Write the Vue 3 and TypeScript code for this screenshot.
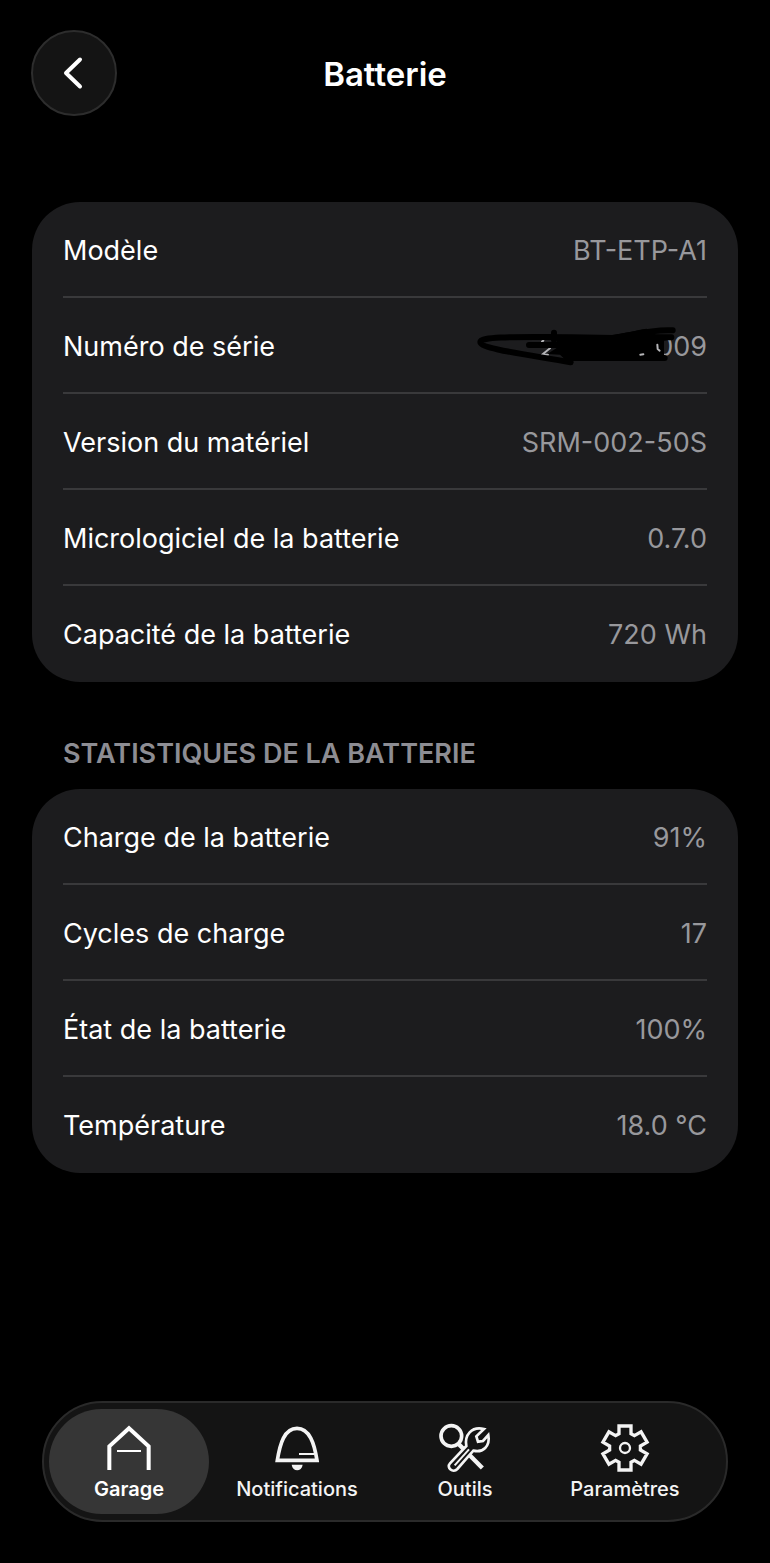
<script setup lang="ts">
import { ref } from 'vue'

interface InfoRow {
  label: string
  value: string
  redacted?: boolean
}

interface Tab {
  id: string
  label: string
}

const details: InfoRow[] = [
  { label: 'Modèle', value: 'BT-ETP-A1' },
  { label: 'Numéro de série', value: '009', redacted: true },
  { label: 'Version du matériel', value: 'SRM-002-50S' },
  { label: 'Micrologiciel de la batterie', value: '0.7.0' },
  { label: 'Capacité de la batterie', value: '720 Wh' },
]

const stats: InfoRow[] = [
  { label: 'Charge de la batterie', value: '91%' },
  { label: 'Cycles de charge', value: '17' },
  { label: 'État de la batterie', value: '100%' },
  { label: 'Température', value: '18.0 °C' },
]

const tabs: Tab[] = [
  { id: 'garage', label: 'Garage' },
  { id: 'notifications', label: 'Notifications' },
  { id: 'tools', label: 'Outils' },
  { id: 'settings', label: 'Paramètres' },
]

const active = ref('garage')
</script>

<template>
  <div class="page">
    <header class="header">
      <button class="back" type="button" aria-label="Retour">
        <svg viewBox="0 0 36 36" aria-hidden="true">
          <path d="M24 4.500 L10 18 L24 31.500" />
        </svg>
      </button>
      <h1 class="title">Batterie</h1>
    </header>

    <main class="content">
      <dl class="card">
        <div v-for="row in details" :key="row.label" class="row">
          <dt class="label">{{ row.label }}</dt>
          <dd class="value">
            {{ row.value }}
            <svg v-if="row.redacted" class="scribble" viewBox="48 405 600 126" aria-hidden="true">
              <path class="trace" d="M246 455 L250 452 M246 494 L270 475 M246 494 H264" />
              <path
                class="ink-fill"
                d="M290 434 L440 437 C500 430 530 420 560 416 L588 434 L636 436 L636 448 L612 452 L612 496 L615 513 L320 513 L300 494 L262 492 L290 474 Z"
              />
              <path
                class="ink"
                d="M638 421 C575 417 525 434 460 444 L290 441 C190 441 61 438 61 456 C61 476 190 492 332 517 M207 465 H330 M282 428 V450 M500 442 H634 M500 504 H614"
              />
              <path class="trace" d="M541 494 L550 493 M592 464 L593 477 L599 482" />
            </svg>
          </dd>
        </div>
      </dl>

      <h2 class="section">STATISTIQUES DE LA BATTERIE</h2>

      <dl class="card">
        <div v-for="row in stats" :key="row.label" class="row">
          <dt class="label">{{ row.label }}</dt>
          <dd class="value">{{ row.value }}</dd>
        </div>
      </dl>
    </main>

    <nav class="tabs" aria-label="Navigation principale">
      <button
        v-for="tab in tabs"
        :key="tab.id"
        type="button"
        class="tab"
        :class="[tab.id, { active: active === tab.id }]"
        :aria-current="active === tab.id ? 'page' : undefined"
        @click="active = tab.id"
      >
        <svg v-if="tab.id === 'garage'" class="icon" viewBox="226 101 144 144" aria-hidden="true">
          <path d="M239 239 V168 L298 114 L357 168 V239" stroke-width="12" />
          <path d="M262 182 H334" stroke-width="6" />
        </svg>
        <svg v-else-if="tab.id === 'notifications'" class="icon" viewBox="146 101 144 144" aria-hidden="true">
          <path d="M159 210 C167 160 180 114 218 114 C256 114 270 160 278 210 Z" stroke-width="11" />
          <path d="M224 191 H270" stroke-width="6" />
          <path class="solid" d="M202 223 H235 C232 245 205 245 202 223 Z" />
        </svg>
        <svg v-else-if="tab.id === 'tools'" class="icon" viewBox="64 71 144 144" aria-hidden="true">
          <circle cx="95" cy="107" r="31" stroke-width="11" />
          <path d="M116 130 L188 203" stroke-width="13" />
          <path
            class="wrench"
            d="M91 189 L140 137 C134 105 155 77 193 86 L170 108 L175 124 L190 122 L206 104 C212 138 190 158 161 151 L113 206 C100 220 79 202 91 189 Z"
            stroke-width="8"
          />
          <path d="M105 195 L148 147" stroke-width="6" />
        </svg>
        <svg v-else class="icon" viewBox="124 101 144 144" aria-hidden="true">
          <path
            d="M178 107 H214 V130 L224.200 135.900 L244.200 124.400 L262.200 155.600 L242.200 167.100 V178.900 L262.200 190.400 L244.200 221.600 L224.200 210.100 L214 216 V239 H178 V216 L167.800 210.100 L147.800 221.600 L129.800 190.400 L149.800 178.900 V167.100 L129.800 155.600 L147.800 124.400 L167.800 135.900 L178 130 Z"
            stroke-width="10"
          />
          <circle cx="196" cy="173" r="15" stroke-width="7" />
        </svg>
        <span>{{ tab.label }}</span>
      </button>
    </nav>
  </div>
</template>

<style>
body {
  margin: 0;
  background: #000;
}
</style>

<style scoped>
.page {
  box-sizing: border-box;
  min-height: 100vh;
  display: flex;
  flex-direction: column;
  padding: 30px 0 41px;
  background: #000;
  color: #fff;
  font-family: Inter, Roboto, sans-serif;
}

.header {
  display: grid;
  grid-template-columns: 86px 1fr 86px;
  align-items: center;
  padding: 0 31px;
}

.back {
  box-sizing: border-box;
  width: 86px;
  height: 86px;
  display: flex;
  align-items: center;
  justify-content: center;
  padding: 0;
  border: 2px solid #2d2d2d;
  border-radius: 50%;
  background: #141414;
}

.back svg {
  width: 36px;
  height: 36px;
  fill: none;
  stroke: #fff;
  stroke-width: 4;
  stroke-linecap: round;
  stroke-linejoin: round;
}

.title {
  margin: 0;
  padding-top: 2px;
  text-align: center;
  font-size: 33px;
  line-height: 40px;
  font-weight: 600;
}

.content {
  padding: 86px 32px 32px;
}

.card {
  margin: 0;
  padding: 0 31px;
  border-radius: 48px;
  background: #1c1c1e;
}

.row {
  box-sizing: border-box;
  min-height: 96px;
  display: flex;
  align-items: center;
  justify-content: space-between;
  gap: 24px;
  padding-top: 4px;
  border-bottom: 2px solid #39393b;
  font-size: 27px;
  line-height: 36px;
}

.row:last-child {
  border-bottom-color: transparent;
}

.label {
  color: #fff;
}

.value {
  position: relative;
  margin: 0;
  color: #98989c;
  text-align: right;
}

.scribble {
  position: absolute;
  top: -4px;
  right: 31px;
  width: 200px;
  height: 42px;
  fill: none;
  stroke-linecap: round;
  stroke-linejoin: round;
}

.ink {
  stroke: #000;
  stroke-width: 18;
}

.ink-fill {
  fill: #000;
}

.trace {
  stroke: #b5b5b8;
  stroke-width: 6;
}

.section {
  margin: 0;
  padding: 54px 31px 17px;
  color: #8d8d93;
  font-size: 27px;
  line-height: 36px;
  font-weight: 600;
}

.tabs {
  display: flex;
  margin: auto 42px 0;
  padding: 6px 21px 6px 5px;
  border: 2px solid #2a2a2a;
  border-radius: 61px;
  background: #141414;
}

.tab {
  box-sizing: border-box;
  flex: 10 1 0;
  min-width: 0;
  height: 105px;
  display: flex;
  flex-direction: column;
  align-items: center;
  gap: 4px;
  padding: 15px 0 0;
  border: 0;
  border-radius: 53px;
  background: none;
  color: #f4f4f4;
  font-family: inherit;
  font-size: 20px;
  line-height: 26px;
  font-weight: 500;
}

.tab.notifications {
  flex-grow: 11;
}

.tab.active {
  background: #363636;
  color: #fff;
  font-weight: 600;
}

.icon {
  flex: none;
  width: 48px;
  height: 48px;
  overflow: visible;
  fill: none;
  stroke: currentColor;
}

.icon .solid {
  fill: currentColor;
  stroke: none;
}

.icon .wrench {
  fill: #141414;
}
</style>
